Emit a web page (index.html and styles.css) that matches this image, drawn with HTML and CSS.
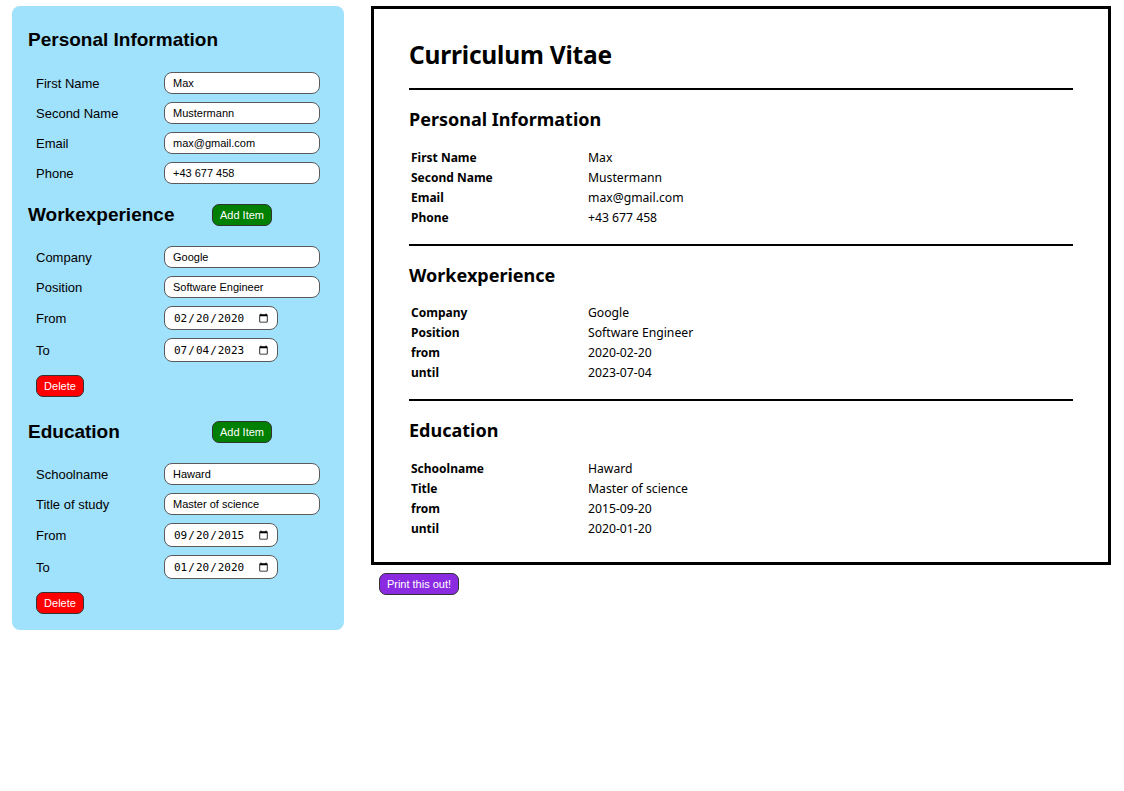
FILE: index.html
```html
<!DOCTYPE html>
<html lang="en">
<head>
<meta charset="utf-8">
<title>CV Builder</title>
<link rel="stylesheet" href="styles.css">
</head>
<body>
<div class="app">
  <form class="editor">
    <div class="sec-head first"><h2>Personal Information</h2></div>
    <div class="fields">
      <label class="row"><span>First Name</span><input class="txt" type="text" value="Max"></label>
      <label class="row"><span>Second Name</span><input class="txt" type="text" value="Mustermann"></label>
      <label class="row"><span>Email</span><input class="txt" type="text" value="max@gmail.com"></label>
      <label class="row"><span>Phone</span><input class="txt" type="text" value="+43 677 458"></label>
    </div>

    <div class="sec-head"><h2>Workexperience</h2><button type="button" class="btn add">Add Item</button></div>
    <div class="fields">
      <label class="row"><span>Company</span><input class="txt" type="text" value="Google"></label>
      <label class="row"><span>Position</span><input class="txt" type="text" value="Software Engineer"></label>
      <label class="row date-row"><span>From</span><input class="date" type="date" value="2020-02-20"></label>
      <label class="row date-row"><span>To</span><input class="date" type="date" value="2023-07-04"></label>
      <div class="del-wrap"><button type="button" class="btn del">Delete</button></div>
    </div>

    <div class="sec-head edu"><h2>Education</h2><button type="button" class="btn add">Add Item</button></div>
    <div class="fields">
      <label class="row"><span>Schoolname</span><input class="txt" type="text" value="Haward"></label>
      <label class="row"><span>Title of study</span><input class="txt" type="text" value="Master of science"></label>
      <label class="row date-row"><span>From</span><input class="date" type="date" value="2015-09-20"></label>
      <label class="row date-row"><span>To</span><input class="date" type="date" value="2020-01-20"></label>
      <div class="del-wrap"><button type="button" class="btn del">Delete</button></div>
    </div>
  </form>

  <div class="preview">
    <div class="cv">
      <h1>Curriculum Vitae</h1>
      <hr>
      <h3>Personal Information</h3>
      <table>
        <tr><th>First Name</th><td>Max</td></tr>
        <tr><th>Second Name</th><td>Mustermann</td></tr>
        <tr><th>Email</th><td>max@gmail.com</td></tr>
        <tr><th>Phone</th><td>+43 677 458</td></tr>
      </table>
      <hr>
      <h3>Workexperience</h3>
      <table class="work">
        <tr><th>Company</th><td>Google</td></tr>
        <tr><th>Position</th><td>Software Engineer</td></tr>
        <tr><th>from</th><td>2020-02-20</td></tr>
        <tr><th>until</th><td>2023-07-04</td></tr>
      </table>
      <hr>
      <h3>Education</h3>
      <table>
        <tr><th>Schoolname</th><td>Haward</td></tr>
        <tr><th>Title</th><td>Master of science</td></tr>
        <tr><th>from</th><td>2015-09-20</td></tr>
        <tr><th>until</th><td>2020-01-20</td></tr>
      </table>
    </div>
    <button type="button" class="btn print">Print this out!</button>
  </div>
</div>
</body>
</html>
```

FILE: styles.css
```css
* { box-sizing: border-box; }

body {
  margin: 0;
  background: #fff;
  font-family: "Liberation Sans", Arial, sans-serif;
  color: #000;
}

.app {
  display: flex;
  align-items: flex-start;
  gap: 27px;
  padding: 6px 13px 0 12px;
}

/* ---------- editor panel ---------- */
.editor {
  width: 332px;
  flex: none;
  background: #a0e1fc;
  border-radius: 8px;
  padding: 20px 16px 16px 16px;
  display: flex;
  flex-direction: column;
}

.sec-head {
  height: 28px;
  display: flex;
  align-items: center;
  margin-bottom: 17px;
}
.sec-head.first { margin-bottom: 18px; }
.sec-head h2 {
  margin: 0;
  font-size: 19px;
  font-weight: bold;
  flex: 0 0 184px;
  white-space: nowrap;
}
.editor .fields + .sec-head { margin-top: 17px; }
.editor .fields + .sec-head.edu { margin-top: 21px; margin-bottom: 17px; }

.fields {
  display: flex;
  flex-direction: column;
  gap: 8px;
  padding-left: 8px;
}

.row {
  display: grid;
  grid-template-columns: 128px auto;
  align-items: center;
  font-size: 13px;
}
.row span { line-height: 16px; padding-top: 1px; }

.txt {
  width: 156px;
  height: 22px;
  border: 1px solid #5a5a5a;
  border-radius: 8px;
  padding: 0 8px;
  font-family: "Liberation Sans", Arial, sans-serif;
  font-size: 11px;
  color: #000;
  background: #fff;
  outline: none;
}

.date {
  width: 114px;
  height: 24px;
  border: 1px solid #5a5a5a;
  border-radius: 8px;
  padding: 0 6px 0 8px;
  font-family: "DejaVu Sans Mono", monospace;
  font-size: 11px;
  color: #000;
  background: #fff;
  outline: none;
}

.del-wrap { padding-top: 5px; }

.btn {
  height: 22px;
  border: 1px solid #333;
  border-radius: 7px;
  color: #fff;
  font-family: "Liberation Sans", Arial, sans-serif;
  font-size: 11px;
  padding: 0;
  cursor: pointer;
}
.add { background: #008000; width: 60px; }
.del { background: #ff0000; width: 48px; }
.print { background: #8a2be2; width: 80px; margin-left: 8px; margin-top: 8px; }

/* ---------- preview ---------- */
.preview {
  width: 740px;
  flex: none;
  display: flex;
  flex-direction: column;
  align-items: flex-start;
}

.cv {
  width: 740px;
  border: 3px solid #000;
  padding: 26px 35px 24px 35px;
  font-family: "Noto Sans", "Open Sans", sans-serif;
}

.cv h1 {
  margin: 0;
  font-size: 24.5px;
  line-height: 40px;
  font-weight: bold;
  letter-spacing: -0.2px;
}

.cv hr {
  border: 0;
  border-top: 2px solid #000;
  margin: 0;
}
.cv h1 + hr { margin-top: 13px; }

.cv h3 {
  margin: 16px 0 0 0;
  font-size: 18px;
  line-height: 26px;
  font-weight: bold;
}

.cv table {
  border-collapse: collapse;
  margin-top: 15px;
  margin-bottom: 17px;
}
.cv h3 + table.work { margin-top: 14px; }
.cv table.work { margin-bottom: 17px; }
.cv th, .cv td {
  padding: 0 2px;
  height: 20px;
  font-size: 12.2px;
  text-align: left;
  vertical-align: middle;
}
.cv th { width: 177px; font-weight: bold; font-size: 12px; }
.cv td { font-weight: normal; }
.cv table:last-child { margin-bottom: 0; }
```
